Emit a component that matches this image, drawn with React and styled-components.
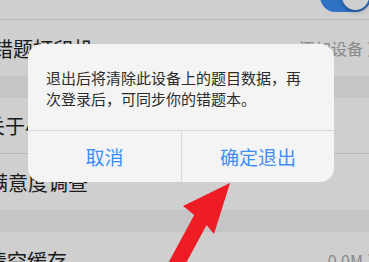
import React from 'react';
import styled, { createGlobalStyle } from 'styled-components';

const GlobalStyle = createGlobalStyle`
	html, body {
		margin: 0;
		padding: 0;
		background: #ffffff;
	}
	body {
		font-family: "Noto Sans CJK SC", "Noto Sans", sans-serif;
	}
`;

const Screen = styled.div`
	position: relative;
	width: 369px;
	height: 262px;
	overflow: hidden;
	background: #ffffff;
`;

const List = styled.div`
	display: flex;
	flex-direction: column;
	margin-top: -36px;
`;

const Row = styled.div`
	display: flex;
	align-items: center;
	justify-content: space-between;
	height: 56px;
	border-bottom: ${(p) => (p.line ? '1px solid #e6e6e6' : 'none')};
	box-sizing: border-box;
`;

const Label = styled.span`
	font-size: 20px;
	color: #222222;
	margin-left: ${(p) => p.shift}px;
	margin-top: ${(p) => p.lift || 0}px;
	white-space: nowrap;
`;

const Extra = styled.div`
	display: flex;
	align-items: center;
	gap: 4px;
	margin-right: -14px;
	font-size: 16px;
	color: #a8a8a8;
	white-space: nowrap;
`;

const Chevron = styled.span`
	font-size: 16px;
	color: #c2c2c2;
`;

const Gap = styled.div`
	height: 22px;
	background: #f3f3f3;
`;

const Toggle = styled.div`
	position: relative;
	width: 51px;
	height: 31px;
	margin-right: -2px;
	margin-top: 9px;
	border-radius: 16px;
	background: #3a8cf2;
`;

const Knob = styled.div`
	position: absolute;
	right: 2px;
	top: 2px;
	width: 27px;
	height: 27px;
	border-radius: 50%;
	background: #ffffff;
	box-shadow: 0 2px 4px rgba(0, 0, 0, 0.3);
`;

const Dim = styled.div`
	position: absolute;
	inset: 0;
	background: rgba(0, 0, 0, 0.19);
`;

const Dialog = styled.div`
	position: absolute;
	left: 28px;
	top: 44px;
	width: 306px;
	height: 138px;
	border-radius: 14px;
	background: #f4f4f4;
	display: flex;
	flex-direction: column;
	overflow: hidden;
`;

const Message = styled.div`
	flex: 1;
	padding: 24px 22px 0 18px;
	font-size: 15px;
	line-height: 20.5px;
	color: #2c2c2c;
	border-bottom: 1px solid #d8d8d8;
`;

const Buttons = styled.div`
	display: grid;
	grid-template-columns: 153px 1fr;
	height: 51px;
`;

const Button = styled.div`
	display: flex;
	align-items: center;
	justify-content: center;
	font-size: 19px;
	color: #3d8ef5;
	border-left: ${(p) => (p.divider ? '1px solid #d8d8d8' : 'none')};
`;

const Arrow = styled.svg`
	position: absolute;
	left: 0;
	top: 0;
	pointer-events: none;
`;

export default function App() {
	return (
		<Screen>
			<GlobalStyle />
			<List>
				<Row line>
					<Label shift={-10} lift={-4}>错题本自动同步</Label>
					<Toggle>
						<Knob />
					</Toggle>
				</Row>
				<Row>
					<Label shift={-7}>错题打印机</Label>
					<Extra>
						添加设备
						<Chevron>〉</Chevron>
					</Extra>
				</Row>
				<Gap />
				<Row line>
					<Label shift={-15}>关于小猿搜题</Label>
				</Row>
				<Row>
					<Label shift={-12}>满意度调查</Label>
				</Row>
				<Gap />
				<Row>
					<Label shift={-13}>清空缓存</Label>
					<Extra>
						0.0M
						<Chevron>〉</Chevron>
					</Extra>
				</Row>
			</List>
			<Dim />
			<Dialog>
				<Message>退出后将清除此设备上的题目数据，再次登录后，可同步你的错题本。</Message>
				<Buttons>
					<Button>取消</Button>
					<Button divider>确定退出</Button>
				</Buttons>
			</Dialog>
			<Arrow width="369" height="262" viewBox="0 0 369 262">
				<polygon
					points="230,183 214,234 206.6,225 179.6,275 167.2,265 194.2,215 183,206"
					fill="#ee1c25"
				/>
			</Arrow>
		</Screen>
	);
}
